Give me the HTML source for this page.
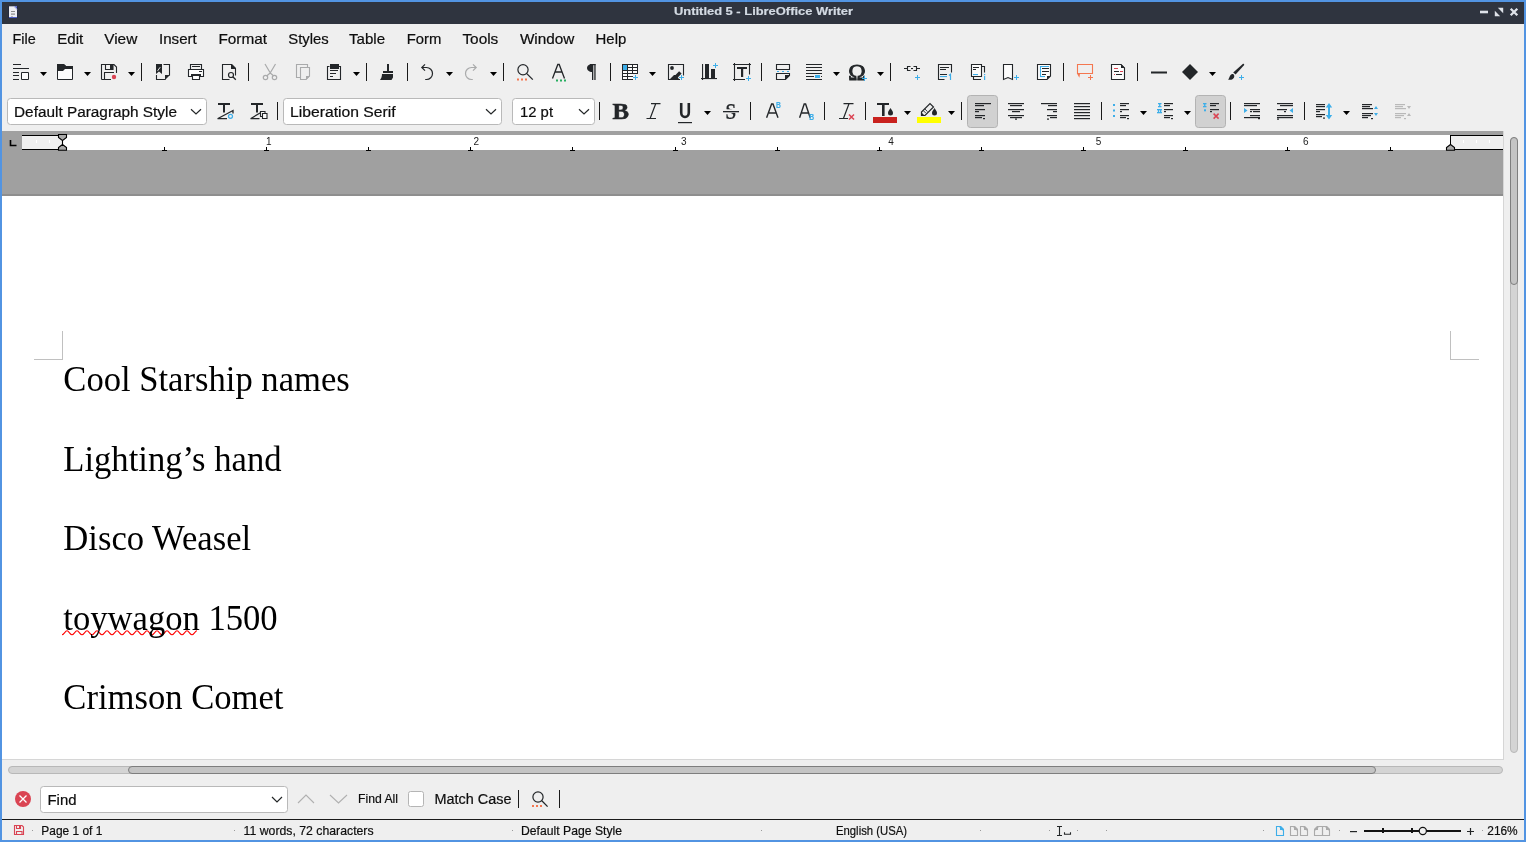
<!DOCTYPE html>
<html><head><meta charset="utf-8"><title>LibreOffice Writer</title>
<style>html,body{margin:0;padding:0;overflow:hidden;background:#efefef}svg text{white-space:pre}</style>
</head><body>
<svg width="1526" height="842" viewBox="0 0 1526 842" style="display:block;will-change:transform"><rect x="0" y="0" width="1526" height="842" fill="#5294e2" />
<rect x="2" y="2" width="1522" height="838" fill="#efefef" />
<rect x="2" y="2" width="1522" height="22" fill="#2f343f" />
<text x="674" y="15" font-family="&quot;Liberation Sans&quot;, sans-serif" font-size="11.5" font-weight="700" fill="#d3dae3" textLength="179" lengthAdjust="spacingAndGlyphs"  stroke="#d3dae3" stroke-width="0.2">Untitled 5 - LibreOffice Writer</text>
<rect x="8.5" y="6" width="9" height="12" fill="#1d2240" />
<rect x="9" y="6.3" width="8" height="11.4" fill="#eeeef2" />
<rect x="9" y="17" width="8" height="1" fill="#5060c8" />
<path d="M13.5 6.3h3.5v3.5z" fill="#5060c8" stroke="none" stroke-width="1" />
<path d="M14 6.3l3 3" fill="none" stroke="#eeeef2" stroke-width="0.7" />
<rect x="11" y="11" width="4" height="1" fill="#8a8a8a" />
<rect x="11" y="13.5" width="4" height="1.2" fill="#8a8a8a" />
<rect x="11" y="16" width="2" height="0.8" fill="#aaa" />
<rect x="1480" y="10.7" width="8" height="2.6" fill="#dfe3ea" />
<path d="M1494.8 16.2v-5.4l5.4 5.4zM1503.2 7.8v5.4l-5.4-5.4z" fill="#dfe3ea" stroke="none" stroke-width="1" />
<path d="M1510.7 8.7l6.6 6.6M1517.3 8.7l-6.6 6.6" fill="none" stroke="#dfe3ea" stroke-width="2.3" />
<text x="12.5" y="44" font-family="&quot;Liberation Sans&quot;, sans-serif" font-size="14.2" font-weight="400" fill="#0e0e0e" textLength="23.2" lengthAdjust="spacingAndGlyphs"  stroke="#0e0e0e" stroke-width="0.2">File</text>
<text x="57.3" y="44" font-family="&quot;Liberation Sans&quot;, sans-serif" font-size="14.2" font-weight="400" fill="#0e0e0e" textLength="26" lengthAdjust="spacingAndGlyphs"  stroke="#0e0e0e" stroke-width="0.2">Edit</text>
<text x="104.2" y="44" font-family="&quot;Liberation Sans&quot;, sans-serif" font-size="14.2" font-weight="400" fill="#0e0e0e" textLength="33.1" lengthAdjust="spacingAndGlyphs"  stroke="#0e0e0e" stroke-width="0.2">View</text>
<text x="159" y="44" font-family="&quot;Liberation Sans&quot;, sans-serif" font-size="14.2" font-weight="400" fill="#0e0e0e" textLength="37.8" lengthAdjust="spacingAndGlyphs"  stroke="#0e0e0e" stroke-width="0.2">Insert</text>
<text x="218.4" y="44" font-family="&quot;Liberation Sans&quot;, sans-serif" font-size="14.2" font-weight="400" fill="#0e0e0e" textLength="48.6" lengthAdjust="spacingAndGlyphs"  stroke="#0e0e0e" stroke-width="0.2">Format</text>
<text x="288.3" y="44" font-family="&quot;Liberation Sans&quot;, sans-serif" font-size="14.2" font-weight="400" fill="#0e0e0e" textLength="40.4" lengthAdjust="spacingAndGlyphs"  stroke="#0e0e0e" stroke-width="0.2">Styles</text>
<text x="349" y="44" font-family="&quot;Liberation Sans&quot;, sans-serif" font-size="14.2" font-weight="400" fill="#0e0e0e" textLength="36.1" lengthAdjust="spacingAndGlyphs"  stroke="#0e0e0e" stroke-width="0.2">Table</text>
<text x="406.8" y="44" font-family="&quot;Liberation Sans&quot;, sans-serif" font-size="14.2" font-weight="400" fill="#0e0e0e" textLength="34.6" lengthAdjust="spacingAndGlyphs"  stroke="#0e0e0e" stroke-width="0.2">Form</text>
<text x="462.4" y="44" font-family="&quot;Liberation Sans&quot;, sans-serif" font-size="14.2" font-weight="400" fill="#0e0e0e" textLength="35.9" lengthAdjust="spacingAndGlyphs"  stroke="#0e0e0e" stroke-width="0.2">Tools</text>
<text x="519.9" y="44" font-family="&quot;Liberation Sans&quot;, sans-serif" font-size="14.2" font-weight="400" fill="#0e0e0e" textLength="54.5" lengthAdjust="spacingAndGlyphs"  stroke="#0e0e0e" stroke-width="0.2">Window</text>
<text x="595.6" y="44" font-family="&quot;Liberation Sans&quot;, sans-serif" font-size="14.2" font-weight="400" fill="#0e0e0e" textLength="30.7" lengthAdjust="spacingAndGlyphs"  stroke="#0e0e0e" stroke-width="0.2">Help</text>
<rect x="13" y="64" width="8" height="1" fill="#232629" />
<rect x="13" y="68" width="16" height="1" fill="#232629" />
<rect x="13" y="72" width="6" height="1" fill="#232629" />
<rect x="13" y="75" width="6" height="1" fill="#232629" />
<rect x="13" y="79" width="6" height="1" fill="#232629" />
<path d="M21.5 72.5h7v7h-7z" fill="#fcfcfc" stroke="#232629" stroke-width="1" />
<path d="M40 72h7l-3.5 4z" fill="#000" stroke="none" stroke-width="1" />
<path d="M57.5 64.5h6.5l2 2h6.5v13h-15z" fill="#fcfcfc" stroke="#232629" stroke-width="1" />
<path d="M57 64h7l2 2h7v3h-8l-2 2h-6z" fill="#232629" stroke="none" stroke-width="1" />
<path d="M84 72h7l-3.5 4z" fill="#000" stroke="none" stroke-width="1" />
<path d="M101.5 79.5v-15h12.5l2.5 2.5v6M101.5 79.5h9.5" fill="none" stroke="#232629" stroke-width="1.1" />
<path d="M105.5 64.5v5h7.5v-5" fill="none" stroke="#232629" stroke-width="1.1" />
<rect x="110" y="65" width="3" height="4" fill="#232629" />
<path d="M104.5 79.5v-7h9.5" fill="none" stroke="#232629" stroke-width="1.1" />
<circle cx="114" cy="77" r="2.2" fill="#da4453"/>
<path d="M128 72h7l-3.5 4z" fill="#000" stroke="none" stroke-width="1" />
<rect x="141" y="63" width="1" height="18" fill="#1a1a1a" />
<path d="M156 64h6v10l-3-2.5-3 2.5z" fill="#232629" stroke="none" stroke-width="1" />
<path d="M157.6 70.8l2.6-3.6" fill="none" stroke="#fff" stroke-width="0.9" />
<path d="M163.5 64.5h6v11M156.5 75v4.5h9" fill="none" stroke="#232629" stroke-width="1.1" />
<path d="M165 80l5-5h-5z" fill="#232629" stroke="none" stroke-width="1" />
<path d="M190.5 69v-4.5h11v4.5" fill="none" stroke="#232629" stroke-width="1.1" />
<rect x="192" y="66" width="8" height="1" fill="#232629" />
<path d="M188.5 69.5h15v7h-15z" fill="#fcfcfc" stroke="#232629" stroke-width="1.1" />
<rect x="191" y="74" width="10" height="2" fill="#232629" />
<rect x="199" y="71" width="3" height="1" fill="#232629" />
<path d="M192.5 76v3.5h7v-3.5" fill="#fcfcfc" stroke="#232629" stroke-width="1.1" />
<path d="M232 64.5h-9.5v15h7M235.5 75.5v-7" fill="none" stroke="#232629" stroke-width="1.1" />
<path d="M231 64h1l4 4v1h-5z" fill="#232629" stroke="none" stroke-width="1" />
<circle cx="231" cy="75" r="2.5" fill="none" stroke="#232629" stroke-width="1.2"/>
<path d="M232.8 76.8l3 3" fill="none" stroke="#232629" stroke-width="1.3" />
<rect x="248" y="63" width="1" height="18" fill="#1a1a1a" />
<path d="M265 64l5.3 9M275.5 64l-5.3 9M270.2 73l-3.3 2.8M270.2 73l3.3 2.8" fill="none" stroke="#a9aaab" stroke-width="1.2" />
<circle cx="265.5" cy="77.5" r="2.2" fill="none" stroke="#a9aaab" stroke-width="1.2"/><circle cx="274.5" cy="77.5" r="2.2" fill="none" stroke="#a9aaab" stroke-width="1.2"/>
<path d="M300 77.5h-3.5v-13h11v3" fill="none" stroke="#a9aaab" stroke-width="1.1" />
<path d="M300.5 67.5h9v8.5l-3.5 3.5h-5.5z" fill="none" stroke="#a9aaab" stroke-width="1.1" />
<path d="M306 80v-4h4z" fill="#a9aaab" stroke="none" stroke-width="1" />
<path d="M329.5 66.5h-2v13h13v-13h-2" fill="none" stroke="#232629" stroke-width="1.1" />
<rect x="330" y="64" width="9" height="5" fill="#232629" />
<rect x="330" y="70" width="8" height="1" fill="#232629" />
<rect x="330" y="73" width="6" height="1" fill="#232629" />
<rect x="330" y="76" width="3" height="1" fill="#232629" />
<path d="M353 72h7l-3.5 4z" fill="#000" stroke="none" stroke-width="1" />
<rect x="366" y="63" width="1" height="18" fill="#1a1a1a" />
<rect x="387" y="64" width="2" height="7" fill="#232629" />
<rect x="383" y="71" width="10" height="2" fill="#232629" />
<path d="M382 74h11v3.5l-1.5 2.5h-11.5c1.2-1.5 2-3.5 2-6z" fill="#232629" stroke="none" stroke-width="1" />
<rect x="407" y="63" width="1" height="18" fill="#1a1a1a" />
<path d="M425 64.3l-3.2 3.2 3.2 3.2M422 67.5h4.5a6 6 0 0 1 0 12h-1.3" fill="none" stroke="#232629" stroke-width="1.2" />
<path d="M446 72h7l-3.5 4z" fill="#000" stroke="none" stroke-width="1" />
<path d="M473 64.3l3.2 3.2-3.2 3.2M476 67.5h-4.5a6 6 0 0 0 0 12h1.3" fill="none" stroke="#a9aaab" stroke-width="1.2" />
<path d="M490 72h7l-3.5 4z" fill="#000" stroke="none" stroke-width="1" />
<rect x="503" y="63" width="1" height="18" fill="#1a1a1a" />
<circle cx="523" cy="69.8" r="5.1" fill="none" stroke="#232629" stroke-width="1.2"/>
<path d="M526.8 73.6l6 6" fill="none" stroke="#232629" stroke-width="1.3" />
<rect x="517" y="78.5" width="2" height="2" fill="#f47750" />
<rect x="521" y="78.5" width="2" height="2" fill="#f47750" />
<rect x="525" y="78.5" width="2" height="2" fill="#f47750" />
<path d="M552.5 78.5l5.3-14h1.4l5.3 14M555 72h7" fill="none" stroke="#232629" stroke-width="1.3" />
<rect x="556" y="79.5" width="2" height="2" fill="#27ae60" />
<rect x="560" y="79.5" width="2" height="2" fill="#27ae60" />
<rect x="564" y="79.5" width="2" height="2" fill="#27ae60" />
<path d="M592 64v8c-2.8 0-5-1.8-5-4s2.2-4 5-4z" fill="#232629" stroke="none" stroke-width="1" />
<rect x="590" y="64" width="5.5" height="1.2" fill="#232629" />
<rect x="592" y="64" width="1.3" height="16" fill="#232629" />
<rect x="594.3" y="64" width="1.3" height="16" fill="#232629" />
<rect x="610" y="63" width="1" height="18" fill="#1a1a1a" />
<rect x="622" y="64" width="16" height="10" fill="#232629" />
<rect x="622" y="73" width="11" height="7" fill="#232629" />
<rect x="623" y="65" width="4" height="2" fill="#fcfcfc" />
<rect x="628" y="65" width="4" height="2" fill="#fcfcfc" />
<rect x="633" y="65" width="4" height="2" fill="#fcfcfc" />
<rect x="623" y="68" width="4" height="2" fill="#fcfcfc" />
<rect x="628" y="68" width="4" height="2" fill="#fcfcfc" />
<rect x="633" y="68" width="4" height="2" fill="#fcfcfc" />
<rect x="623" y="71" width="4" height="2" fill="#fcfcfc" />
<rect x="628" y="71" width="4" height="2" fill="#fcfcfc" />
<rect x="633" y="71" width="4" height="2" fill="#fcfcfc" />
<rect x="623" y="74" width="4" height="2" fill="#fcfcfc" />
<rect x="628" y="74" width="5" height="2" fill="#fcfcfc" />
<rect x="623" y="77" width="4" height="2" fill="#fcfcfc" />
<rect x="628" y="77" width="5" height="2" fill="#fcfcfc" />
<rect x="623" y="65" width="4" height="5" fill="#3daee9" />
<rect x="633" y="77" width="5" height="1" fill="#3daee9" />
<rect x="635" y="75" width="1" height="5" fill="#3daee9" />
<path d="M649 72h7l-3.5 4z" fill="#000" stroke="none" stroke-width="1" />
<path d="M680 79.5h-11.5v-15h15v11" fill="none" stroke="#232629" stroke-width="1.1" />
<circle cx="672" cy="68" r="1.9" fill="#232629"/>
<path d="M669 80l5-5h1.5l3.6-3.8 2.5 2.4-3.8 3.9 2 2.5z" fill="#232629" stroke="none" stroke-width="1" />
<rect x="679" y="77" width="5" height="1" fill="#3daee9" />
<rect x="681" y="75" width="1" height="5" fill="#3daee9" />
<rect x="702" y="64" width="1.1" height="16" fill="#232629" />
<rect x="701" y="78" width="16" height="1.1" fill="#232629" />
<rect x="705" y="64" width="4" height="14" fill="#232629" />
<rect x="711" y="69" width="4" height="9" fill="#232629" />
<rect x="713" y="65" width="5" height="1" fill="#3daee9" />
<rect x="715" y="63" width="1" height="5" fill="#3daee9" />
<path d="M733 64.5h18M733 79.5h12M734.5 63v18M749.5 63v11.5" fill="none" stroke="#232629" stroke-width="1.1" />
<rect x="737" y="67" width="10" height="2" fill="#232629" />
<rect x="741" y="69" width="2.2" height="8" fill="#232629" />
<rect x="746" y="78" width="5" height="1" fill="#3daee9" />
<rect x="748" y="76" width="1" height="5" fill="#3daee9" />
<rect x="761" y="63" width="1" height="18" fill="#1a1a1a" />
<path d="M776.5 64.5h13v5h-13z" fill="none" stroke="#232629" stroke-width="1.1" />
<rect x="777" y="71" width="2" height="1" fill="#3daee9" />
<rect x="782" y="71" width="2" height="1" fill="#3daee9" />
<rect x="787" y="71" width="2" height="1" fill="#3daee9" />
<path d="M776.5 73.5h13v2l-4 4h-9z" fill="none" stroke="#232629" stroke-width="1.1" />
<path d="M785 75h5l-5 5z" fill="#232629" stroke="none" stroke-width="1" />
<rect x="806" y="64" width="16" height="1" fill="#232629" />
<rect x="806" y="67" width="16" height="1" fill="#232629" />
<rect x="806" y="70" width="16" height="1" fill="#232629" />
<rect x="806" y="73" width="16" height="1" fill="#232629" />
<rect x="806" y="76" width="8" height="1" fill="#232629" />
<rect x="821" y="76" width="1" height="1" fill="#232629" />
<rect x="806" y="79" width="16" height="1" fill="#232629" />
<rect x="815" y="75" width="5" height="3" fill="#3daee9" />
<path d="M833 72h7l-3.5 4z" fill="#000" stroke="none" stroke-width="1" />
<text x="848.3" y="80" font-family="&quot;Liberation Serif&quot;, serif" font-size="22.5" font-weight="400" fill="#232629" textLength="17.5" lengthAdjust="spacingAndGlyphs" stroke="#232629" stroke-width="0.9">Ω</text>
<rect x="862" y="78" width="5" height="1" fill="#3daee9" />
<rect x="864" y="76" width="1" height="5" fill="#3daee9" />
<path d="M877 72h7l-3.5 4z" fill="#000" stroke="none" stroke-width="1" />
<rect x="890" y="63" width="1" height="18" fill="#1a1a1a" />
<path d="M904 68.5h3.5M916.5 68.5h3.5M910.5 66.5h-3v4h3M913.5 66.5h3v4h-3" fill="none" stroke="#232629" stroke-width="1.1" />
<rect x="911" y="68" width="2" height="1.1" fill="#232629" />
<rect x="915" y="77" width="5" height="1" fill="#3daee9" />
<rect x="917" y="75" width="1" height="5" fill="#3daee9" />
<path d="M944.5 79.5h-6v-15h13v8" fill="none" stroke="#232629" stroke-width="1.1" />
<rect x="940" y="67" width="9" height="1" fill="#232629" />
<rect x="940" y="69" width="6" height="1" fill="#232629" />
<rect x="940" y="74" width="7" height="1" fill="#232629" />
<rect x="940" y="76" width="7" height="1.1" fill="#3daee9" />
<path d="M949 75.5l1.5-1.3v5.8" fill="none" stroke="#3daee9" stroke-width="1.2" />
<path d="M971.5 64.5h10v12h-10z" fill="#fcfcfc" stroke="#232629" stroke-width="1.1" />
<path d="M982 66.5h2.5v6M973.5 76.5v3h7.5" fill="none" stroke="#232629" stroke-width="1.1" />
<rect x="973" y="67" width="6" height="1" fill="#232629" />
<rect x="973" y="69" width="3" height="1" fill="#232629" />
<rect x="973" y="74" width="5" height="1.1" fill="#3daee9" />
<rect x="984" y="74" width="1.2" height="1.2" fill="#3daee9" />
<rect x="984" y="76" width="1.2" height="4" fill="#3daee9" />
<path d="M1003.5 64.5h9v15l-4.5-2-4.5 2z" fill="#fcfcfc" stroke="#232629" stroke-width="1.1" />
<rect x="1014" y="77" width="5" height="1" fill="#3daee9" />
<rect x="1016" y="75" width="1" height="5" fill="#3daee9" />
<path d="M1037.5 64.5h13v11.5l-3.5 3.5h-9.5z" fill="#fcfcfc" stroke="#232629" stroke-width="1.1" />
<path d="M1047 79.5l3.5-3.5h-3.5z" fill="#232629" stroke="none" stroke-width="1" />
<path d="M1040.5 77v-10.5h8.5" fill="none" stroke="#3daee9" stroke-width="1.1" />
<rect x="1042" y="68" width="7" height="1" fill="#232629" />
<rect x="1042" y="71" width="7" height="1" fill="#232629" />
<rect x="1042" y="74" width="4" height="1" fill="#232629" />
<rect x="1040" y="76" width="5" height="1.1" fill="#3daee9" />
<rect x="1063" y="63" width="1" height="18" fill="#1a1a1a" />
<path d="M1077.5 64.5h15v9h-15z" fill="none" stroke="#f47750" stroke-width="1.1" />
<path d="M1077 73.5h3l-.6 4.3z" fill="#f47750" stroke="none" stroke-width="1" />
<rect x="1088" y="77" width="5" height="1" fill="#f47750" />
<rect x="1090" y="75" width="1" height="5" fill="#f47750" />
<path d="M1111.5 64.5h9.5l3.5 3.5v11.5h-13z" fill="#fcfcfc" stroke="#232629" stroke-width="1.1" />
<path d="M1121 64l4 4h-4z" fill="#232629" stroke="none" stroke-width="1" />
<rect x="1114" y="68" width="4" height="1" fill="#da4453" />
<rect x="1114" y="71" width="5" height="1" fill="#232629" />
<rect x="1120" y="71" width="3" height="1" fill="#da4453" />
<rect x="1114" y="74" width="1" height="1" fill="#da4453" />
<rect x="1116" y="74" width="6" height="1" fill="#232629" />
<rect x="1137" y="63" width="1" height="18" fill="#1a1a1a" />
<rect x="1151" y="71.5" width="16" height="2" fill="#232629" />
<path d="M1190 64l8 8-8 8-8-8z" fill="#232629" stroke="none" stroke-width="1" />
<path d="M1209 72h7l-3.5 4z" fill="#000" stroke="none" stroke-width="1" />
<path d="M1243 63.8c.6-.2 1.4.6 1.2 1.2l-8.6 9.6-2.4-2.2z" fill="#232629" stroke="none" stroke-width="1" />
<path d="M1233.6 74.4c1 .9 1 2.7-.3 4-1.3 1.3-3.4 1.6-5.2 1.4 .9-.9 1.1-2.3 1.7-3.5.5-1.1 1.5-1.9 2.5-2.2.5-.1 1-.1 1.3.3z" fill="#232629" stroke="none" stroke-width="1" />
<rect x="1239" y="77" width="5" height="1" fill="#3daee9" />
<rect x="1241" y="75" width="1" height="5" fill="#3daee9" />
<rect x="7.5" y="98.5" width="199" height="26" rx="3" fill="#fff" stroke="#b9b9b9"/>
<text x="14" y="117" font-family="&quot;Liberation Sans&quot;, sans-serif" font-size="14" font-weight="400" fill="#0e0e0e" textLength="163" lengthAdjust="spacingAndGlyphs"  stroke="#0e0e0e" stroke-width="0.2">Default Paragraph Style</text>
<path d="M191 109.3l5 4.6 5-4.6" fill="none" stroke="#232627" stroke-width="1.2" />
<rect x="218" y="103" width="12" height="2" fill="#232629" />
<rect x="223" y="105" width="2" height="7.5" fill="#232629" />
<path d="M217.5 118.7l15.5-8.2v3M217.5 118.7h9.5" fill="none" stroke="#232629" stroke-width="1.3" />
<circle cx="230.5" cy="116.3" r="2" fill="none" stroke="#3daee9" stroke-width="1.2"/>
<rect x="251" y="103" width="12" height="2" fill="#232629" />
<rect x="256" y="105" width="2" height="7.5" fill="#232629" />
<path d="M250.5 118.7l10-6M250.5 118.7h9" fill="none" stroke="#232629" stroke-width="1.3" />
<path d="M260.5 111.5h4.5v5h-4.5z" fill="#fcfcfc" stroke="#232629" stroke-width="1.1" />
<path d="M262.5 113.5h4.5v5h-4.5z" fill="#fcfcfc" stroke="#232629" stroke-width="1.1" />
<rect x="277" y="102" width="1" height="18" fill="#1a1a1a" />
<rect x="283.5" y="98.5" width="218" height="26" rx="3" fill="#fff" stroke="#b9b9b9"/>
<text x="290.1" y="117" font-family="&quot;Liberation Sans&quot;, sans-serif" font-size="14" font-weight="400" fill="#0e0e0e" textLength="105.5" lengthAdjust="spacingAndGlyphs"  stroke="#0e0e0e" stroke-width="0.2">Liberation Serif</text>
<path d="M486 109.3l5 4.6 5-4.6" fill="none" stroke="#232627" stroke-width="1.2" />
<rect x="512.5" y="98.5" width="82" height="26" rx="3" fill="#fff" stroke="#b9b9b9"/>
<text x="520" y="117" font-family="&quot;Liberation Sans&quot;, sans-serif" font-size="14" font-weight="400" fill="#0e0e0e" textLength="33" lengthAdjust="spacingAndGlyphs"  stroke="#0e0e0e" stroke-width="0.2">12 pt</text>
<path d="M579 109.3l5 4.6 5-4.6" fill="none" stroke="#232627" stroke-width="1.2" />
<rect x="599" y="102" width="1" height="18" fill="#1a1a1a" />
<text x="612.5" y="119" font-family="&quot;Liberation Serif&quot;, serif" font-size="23.5" font-weight="700" fill="#232629" textLength="16.5" lengthAdjust="spacingAndGlyphs" stroke="#232629" stroke-width="0.6">B</text>
<path d="M651 103.7h9.5M655.7 103.7l-5.5 14.6M646.5 118.5h9.5" fill="none" stroke="#232629" stroke-width="1.2" />
<path d="M681.2 103v9.5c0 2.5 1.6 4.5 3.8 4.5s3.8-2 3.8-4.5v-9.5" fill="none" stroke="#232629" stroke-width="2.6" />
<rect x="678" y="122" width="14" height="1.2" fill="#232629" />
<path d="M704 111h7l-3.5 4z" fill="#000" stroke="none" stroke-width="1" />
<text x="725.6" y="118.6" font-family="&quot;Liberation Serif&quot;, serif" font-size="23.5" font-weight="700" fill="#232629" textLength="10.6" lengthAdjust="spacingAndGlyphs"  stroke="#232629" stroke-width="0.2">S</text>
<rect x="722" y="109.3" width="18" height="3.6" fill="#efefef" />
<rect x="723" y="111" width="16" height="1.3" fill="#232629" />
<rect x="750" y="102" width="1" height="18" fill="#1a1a1a" />
<path d="M766.6 117.8l5-13.8h1.4l5 13.8M769 113h7" fill="none" stroke="#232629" stroke-width="1.4" />
<text x="776.1" y="107.8" font-family="&quot;Liberation Sans&quot;, sans-serif" font-size="8.4" font-weight="700" fill="#3daee9" textLength="4.9" lengthAdjust="spacingAndGlyphs"  stroke="#3daee9" stroke-width="0.2">B</text>
<path d="M799.6 117.8l4.6-13.8h1.4l4.6 13.8M801.8 113h6.4" fill="none" stroke="#232629" stroke-width="1.4" />
<text x="809.2" y="119.8" font-family="&quot;Liberation Sans&quot;, sans-serif" font-size="8.4" font-weight="700" fill="#3daee9" textLength="4.9" lengthAdjust="spacingAndGlyphs"  stroke="#3daee9" stroke-width="0.2">B</text>
<rect x="824" y="102" width="1" height="18" fill="#1a1a1a" />
<path d="M843.5 103.7h10M849 103.7l-5.5 14.6M839 118.5h9" fill="none" stroke="#232629" stroke-width="1.2" />
<path d="M849 114.5l5 5M854 114.5l-5 5" fill="none" stroke="#da4453" stroke-width="1.5" />
<rect x="865" y="102" width="1" height="18" fill="#1a1a1a" />
<rect x="877" y="103" width="12" height="2" fill="#232629" />
<rect x="882" y="105" width="2.6" height="11" fill="#232629" />
<path d="M890.5 108c1.3 2 2.5 3.5 2.5 5a2.5 2.5 0 0 1-5 0c0-1.5 1.2-3 2.5-5z" fill="#232629" stroke="none" stroke-width="1" />
<rect x="873" y="117" width="24" height="6" fill="#c9211e" />
<path d="M904 111h7l-3.5 4z" fill="#000" stroke="none" stroke-width="1" />
<path d="M921.5 115.5v-3.5l8.5-8.5 3.5 3.5-8.5 8.5z" fill="none" stroke="#232629" stroke-width="1.2" />
<path d="M921 112l3.5 3.5h-3.5z" fill="#232629" stroke="none" stroke-width="1" />
<path d="M923.3 110.6l2.6 2.6M924.9 109l2.6 2.6" fill="none" stroke="#232629" stroke-width="0.9" />
<path d="M934.5 108c1.3 2 2.5 3.5 2.5 5a2.5 2.5 0 0 1-5 0c0-1.5 1.2-3 2.5-5z" fill="#232629" stroke="none" stroke-width="1" />
<rect x="917" y="117" width="24" height="6" fill="#ffff00" />
<path d="M948 111h7l-3.5 4z" fill="#000" stroke="none" stroke-width="1" />
<rect x="961" y="102" width="1" height="18" fill="#1a1a1a" />
<rect x="967.5" y="95.5" width="30" height="32" rx="3" fill="#d1d1d1" stroke="#b3b3b3"/>
<rect x="975" y="103" width="16" height="1.2" fill="#232629" />
<rect x="975" y="105" width="9" height="1.2" fill="#232629" />
<rect x="975" y="109" width="10" height="1.2" fill="#232629" />
<rect x="975" y="111" width="4" height="1.2" fill="#232629" />
<rect x="975" y="115" width="10" height="1.2" fill="#232629" />
<rect x="975" y="117" width="7" height="1.2" fill="#232629" />
<rect x="983" y="118" width="2" height="1.2" fill="#232629" />
<rect x="1008" y="103" width="16" height="1.2" fill="#232629" />
<rect x="1010" y="105" width="12" height="1.2" fill="#232629" />
<rect x="1008" y="109" width="16" height="1.2" fill="#232629" />
<rect x="1012" y="111" width="8" height="1.2" fill="#232629" />
<rect x="1008" y="115" width="16" height="1.2" fill="#232629" />
<rect x="1010" y="117" width="12" height="1.2" fill="#232629" />
<rect x="1015" y="118.5" width="2" height="1.2" fill="#232629" />
<rect x="1041" y="103" width="16" height="1.2" fill="#232629" />
<rect x="1048" y="105" width="9" height="1.2" fill="#232629" />
<rect x="1047" y="109" width="10" height="1.2" fill="#232629" />
<rect x="1053" y="111" width="4" height="1.2" fill="#232629" />
<rect x="1047" y="115" width="10" height="1.2" fill="#232629" />
<rect x="1050" y="117" width="7" height="1.2" fill="#232629" />
<rect x="1047" y="118.5" width="2" height="1.2" fill="#232629" />
<rect x="1074" y="103" width="16" height="1.2" fill="#232629" />
<rect x="1074" y="106" width="16" height="1.2" fill="#232629" />
<rect x="1074" y="109" width="16" height="1.2" fill="#232629" />
<rect x="1074" y="112" width="16" height="1.2" fill="#232629" />
<rect x="1074" y="115" width="16" height="1.2" fill="#232629" />
<rect x="1074" y="118" width="16" height="1.2" fill="#232629" />
<rect x="1101" y="102" width="1" height="18" fill="#1a1a1a" />
<rect x="1113" y="104" width="2" height="2" fill="#3daee9" />
<rect x="1113" y="109.5" width="2" height="2" fill="#3daee9" />
<rect x="1113" y="115" width="2" height="2" fill="#3daee9" />
<rect x="1120" y="103" width="9" height="1.2" fill="#232629" />
<rect x="1120" y="105" width="6" height="1.2" fill="#232629" />
<rect x="1120" y="109" width="9" height="1.2" fill="#232629" />
<rect x="1120" y="111" width="2" height="1.2" fill="#232629" />
<rect x="1120" y="115" width="9" height="1.2" fill="#232629" />
<rect x="1120" y="117" width="6" height="1.2" fill="#232629" />
<rect x="1127" y="118" width="2" height="1.2" fill="#232629" />
<path d="M1140 111h7l-3.5 4z" fill="#000" stroke="none" stroke-width="1" />
<rect x="1158" y="103" width="3.5" height="1.3" fill="#3daee9" />
<rect x="1158" y="106" width="3.5" height="1.3" fill="#3daee9" />
<rect x="1159.1" y="103" width="1.3" height="4" fill="#3daee9" />
<rect x="1157" y="109" width="5" height="1.3" fill="#3daee9" />
<rect x="1157" y="112" width="5" height="1.3" fill="#3daee9" />
<rect x="1157.9" y="109" width="1.3" height="4" fill="#3daee9" />
<rect x="1160" y="109" width="1.3" height="4" fill="#3daee9" />
<rect x="1164" y="103" width="9" height="1.2" fill="#232629" />
<rect x="1164" y="105" width="6" height="1.2" fill="#232629" />
<rect x="1164" y="109" width="9" height="1.2" fill="#232629" />
<rect x="1164" y="111" width="2" height="1.2" fill="#232629" />
<rect x="1164" y="115" width="9" height="1.2" fill="#232629" />
<rect x="1164" y="117" width="6" height="1.2" fill="#232629" />
<rect x="1171" y="118" width="2" height="1.2" fill="#232629" />
<path d="M1184 111h7l-3.5 4z" fill="#000" stroke="none" stroke-width="1" />
<rect x="1195.5" y="95.5" width="30" height="32" rx="3" fill="#d1d1d1" stroke="#b3b3b3"/>
<rect x="1203" y="103" width="3.5" height="1.3" fill="#3daee9" />
<rect x="1203" y="106" width="3.5" height="1.3" fill="#3daee9" />
<rect x="1204.1" y="103" width="1.3" height="4" fill="#3daee9" />
<rect x="1204" y="109.3" width="2" height="2" fill="#3daee9" />
<rect x="1210" y="103" width="9" height="1.2" fill="#232629" />
<rect x="1210" y="105" width="6" height="1.2" fill="#232629" />
<rect x="1210" y="109" width="9" height="1.2" fill="#232629" />
<rect x="1210" y="111" width="2" height="1.2" fill="#232629" />
<path d="M1213.6 113.6l5 5M1218.6 113.6l-5 5" fill="none" stroke="#da4453" stroke-width="1.5" />
<rect x="1230" y="102" width="1" height="18" fill="#1a1a1a" />
<rect x="1244" y="103" width="16" height="1.2" fill="#232629" />
<rect x="1244" y="105" width="13" height="1.2" fill="#232629" />
<rect x="1250" y="109" width="10" height="1.2" fill="#232629" />
<rect x="1250" y="111" width="2" height="1.2" fill="#232629" />
<rect x="1253" y="111" width="7" height="1.2" fill="#232629" />
<rect x="1244" y="117" width="16" height="1.2" fill="#232629" />
<rect x="1250" y="115" width="10" height="1.2" fill="#232629" />
<rect x="1258" y="118" width="2" height="1.2" fill="#232629" />
<path d="M1244 108l3.5 2.5-3.5 2.5z" fill="#3daee9" stroke="none" stroke-width="1" />
<rect x="1277" y="103" width="16" height="1.2" fill="#232629" />
<rect x="1280" y="105" width="13" height="1.2" fill="#232629" />
<rect x="1277" y="109" width="10" height="1.2" fill="#232629" />
<rect x="1284" y="111" width="2" height="1.2" fill="#232629" />
<rect x="1277" y="115" width="16" height="1.2" fill="#232629" />
<rect x="1277" y="117" width="16" height="1.2" fill="#232629" />
<rect x="1277" y="118.5" width="2" height="1.2" fill="#232629" />
<path d="M1293 108l-3.5 2.5 3.5 2.5z" fill="#3daee9" stroke="none" stroke-width="1" />
<rect x="1304" y="102" width="1" height="18" fill="#1a1a1a" />
<rect x="1316" y="104" width="9" height="1.2" fill="#232629" />
<rect x="1316" y="106" width="9" height="1.2" fill="#232629" />
<rect x="1316" y="109" width="9" height="1.2" fill="#232629" />
<rect x="1316" y="111" width="4" height="1.2" fill="#232629" />
<rect x="1316" y="114" width="9" height="1.2" fill="#232629" />
<rect x="1316" y="116" width="6" height="1.2" fill="#232629" />
<rect x="1323" y="117.5" width="2" height="1.2" fill="#232629" />
<rect x="1328" y="105" width="2" height="12" fill="#3daee9" />
<path d="M1325.8 107.5l3.2-4.5 3.2 4.5zM1325.8 115l3.2 4.5 3.2-4.5z" fill="#3daee9" stroke="none" stroke-width="1" />
<path d="M1343 111h7l-3.5 4z" fill="#000" stroke="none" stroke-width="1" />
<rect x="1362" y="104" width="10" height="1.2" fill="#232629" />
<rect x="1362" y="106" width="8" height="1.2" fill="#232629" />
<rect x="1362" y="108" width="11" height="1.2" fill="#232629" />
<rect x="1362" y="113" width="11" height="1.2" fill="#232629" />
<rect x="1362" y="115" width="9" height="1.2" fill="#232629" />
<rect x="1362" y="117" width="6" height="1.2" fill="#232629" />
<rect x="1371" y="118" width="2" height="1.2" fill="#232629" />
<path d="M1374 109l2-3 2 3zM1374 113l2 3 2-3z" fill="#3daee9" stroke="none" stroke-width="1" />
<rect x="1395" y="104" width="10" height="1.2" fill="#b9b9b9" />
<rect x="1395" y="106" width="8" height="1.2" fill="#b9b9b9" />
<rect x="1395" y="108" width="11" height="1.2" fill="#b9b9b9" />
<rect x="1395" y="113" width="11" height="1.2" fill="#b9b9b9" />
<rect x="1395" y="115" width="9" height="1.2" fill="#b9b9b9" />
<rect x="1395" y="117" width="6" height="1.2" fill="#b9b9b9" />
<rect x="1404" y="118" width="2" height="1.2" fill="#b9b9b9" />
<path d="M1407 106l2 3 2-3zM1407 116l2-3 2 3z" fill="#b9b9b9" stroke="none" stroke-width="1" />
<rect x="2" y="131" width="1501" height="65" fill="#a0a0a0" />
<rect x="2" y="194" width="1501" height="2" fill="#8e8e8e" />
<rect x="2" y="196" width="1501" height="563" fill="#ffffff" />
<rect x="2" y="759" width="1502" height="1" fill="#d6d6d6" />
<rect x="1503" y="131" width="1" height="629" fill="#d6d6d6" />
<rect x="62" y="135" width="1388" height="15" fill="#ffffff" />
<rect x="22" y="135" width="40.5" height="15" fill="#efefef" />
<rect x="22" y="135" width="40" height="1" fill="#000" />
<rect x="22" y="149" width="40" height="1" fill="#000" />
<rect x="36" y="140" width="1" height="3" fill="#fff" />
<rect x="49" y="140" width="1" height="3" fill="#fff" />
<path d="M58.5 134.5H66.5V137.5L62.5 140.5V144.5L66.5 147.5V150.3H58.5V147.5L62.5 144.5V140.5L58.5 137.5Z" fill="#a9a9a9" stroke="#000" stroke-width="1.1" />
<path d="M10.5 140v5.5h6" fill="none" stroke="#000" stroke-width="1.6" />
<rect x="1450.5" y="135" width="52.5" height="15" fill="#efefef" />
<rect x="1450" y="135" width="53" height="1" fill="#000" />
<rect x="1451" y="149" width="52" height="1" fill="#000" />
<rect x="1450" y="135" width="1" height="10" fill="#000" />
<rect x="1463" y="140" width="1" height="3" fill="#fff" />
<rect x="1476" y="140" width="1" height="3" fill="#fff" />
<rect x="1489" y="140" width="1" height="3" fill="#fff" />
<path d="M1450.5 144.5L1454.5 147.5V150.3H1446.5V147.5Z" fill="#a9a9a9" stroke="#000" stroke-width="1.1" />
<rect x="162" y="150" width="5" height="1" fill="#000" />
<rect x="164" y="147" width="1" height="3" fill="#000" />
<rect x="264" y="150" width="5" height="1" fill="#000" />
<rect x="266" y="147" width="1" height="3" fill="#000" />
<rect x="366" y="150" width="5" height="1" fill="#000" />
<rect x="368" y="147" width="1" height="3" fill="#000" />
<rect x="468" y="150" width="5" height="1" fill="#000" />
<rect x="470" y="147" width="1" height="3" fill="#000" />
<rect x="570" y="150" width="5" height="1" fill="#000" />
<rect x="572" y="147" width="1" height="3" fill="#000" />
<rect x="673" y="150" width="5" height="1" fill="#000" />
<rect x="675" y="147" width="1" height="3" fill="#000" />
<rect x="775" y="150" width="5" height="1" fill="#000" />
<rect x="777" y="147" width="1" height="3" fill="#000" />
<rect x="877" y="150" width="5" height="1" fill="#000" />
<rect x="879" y="147" width="1" height="3" fill="#000" />
<rect x="979" y="150" width="5" height="1" fill="#000" />
<rect x="981" y="147" width="1" height="3" fill="#000" />
<rect x="1081" y="150" width="5" height="1" fill="#000" />
<rect x="1083" y="147" width="1" height="3" fill="#000" />
<rect x="1183" y="150" width="5" height="1" fill="#000" />
<rect x="1185" y="147" width="1" height="3" fill="#000" />
<rect x="1285" y="150" width="5" height="1" fill="#000" />
<rect x="1287" y="147" width="1" height="3" fill="#000" />
<rect x="1388" y="150" width="5" height="1" fill="#000" />
<rect x="1390" y="147" width="1" height="3" fill="#000" />
<text x="266.1" y="145" font-family="&quot;Liberation Sans&quot;, sans-serif" font-size="10" font-weight="400" fill="#222" >1</text>
<text x="473.5" y="145" font-family="&quot;Liberation Sans&quot;, sans-serif" font-size="10" font-weight="400" fill="#222" >2</text>
<text x="680.9" y="145" font-family="&quot;Liberation Sans&quot;, sans-serif" font-size="10" font-weight="400" fill="#222" >3</text>
<text x="888.3" y="145" font-family="&quot;Liberation Sans&quot;, sans-serif" font-size="10" font-weight="400" fill="#222" >4</text>
<text x="1095.7" y="145" font-family="&quot;Liberation Sans&quot;, sans-serif" font-size="10" font-weight="400" fill="#222" >5</text>
<text x="1303.1" y="145" font-family="&quot;Liberation Sans&quot;, sans-serif" font-size="10" font-weight="400" fill="#222" >6</text>
<rect x="1510.5" y="137.5" width="7" height="615" rx="3.5" fill="#d4d4d4" stroke="#b8b8b8"/>
<rect x="1510.5" y="137.5" width="7" height="147" rx="3.5" fill="#c4c4c4" stroke="#7e7e7e"/>
<rect x="8.5" y="766.5" width="1494" height="7" rx="3.5" fill="#d4d4d4" stroke="#b8b8b8"/>
<rect x="128.5" y="766.5" width="1247" height="7" rx="3.5" fill="#c4c4c4" stroke="#7e7e7e"/>
<rect x="62" y="331" width="1" height="29" fill="#c0c0c0" />
<rect x="34" y="359" width="29" height="1" fill="#c0c0c0" />
<rect x="1450" y="331" width="1" height="29" fill="#c0c0c0" />
<rect x="1450" y="359" width="29" height="1" fill="#c0c0c0" />
<path d="M62 634.8 C63.8 634.8 65.2 630.8 67 630.8 C68.8 630.8 70.2 634.8 72 634.8 C73.8 634.8 75.2 630.8 77 630.8 C78.8 630.8 80.2 634.8 82 634.8 C83.8 634.8 85.2 630.8 87 630.8 C88.8 630.8 90.2 634.8 92 634.8 C93.8 634.8 95.2 630.8 97 630.8 C98.8 630.8 100.2 634.8 102 634.8 C103.8 634.8 105.2 630.8 107 630.8 C108.8 630.8 110.2 634.8 112 634.8 C113.8 634.8 115.2 630.8 117 630.8 C118.8 630.8 120.2 634.8 122 634.8 C123.8 634.8 125.2 630.8 127 630.8 C128.8 630.8 130.2 634.8 132 634.8 C133.8 634.8 135.2 630.8 137 630.8 C138.8 630.8 140.2 634.8 142 634.8 C143.8 634.8 145.2 630.8 147 630.8 C148.8 630.8 150.2 634.8 152 634.8 C153.8 634.8 155.2 630.8 157 630.8 C158.8 630.8 160.2 634.8 162 634.8 C163.8 634.8 165.2 630.8 167 630.8 C168.8 630.8 170.2 634.8 172 634.8 C173.8 634.8 175.2 630.8 177 630.8 C178.8 630.8 180.2 634.8 182 634.8 C183.8 634.8 185.2 630.8 187 630.8 C188.8 630.8 190.2 634.8 192 634.8 C193.8 634.8 195.2 630.8 197 630.8" fill="none" stroke="#ff0000" stroke-width="1.1" />
<g transform="translate(63.3 391) scale(1.002 1.045)"><text x="0" y="0" font-family="&quot;Liberation Serif&quot;, serif" font-size="34.56" fill="#000">Cool Starship names</text></g>
<g transform="translate(63.3 471) scale(1.002 1.045)"><text x="0" y="0" font-family="&quot;Liberation Serif&quot;, serif" font-size="34.56" fill="#000">Lighting’s hand</text></g>
<g transform="translate(63.3 550) scale(1.002 1.045)"><text x="0" y="0" font-family="&quot;Liberation Serif&quot;, serif" font-size="34.56" fill="#000">Disco Weasel</text></g>
<g transform="translate(63.3 630) scale(1.002 1.045)"><text x="0" y="0" font-family="&quot;Liberation Serif&quot;, serif" font-size="34.56" fill="#000">toywagon 1500</text></g>
<g transform="translate(63.3 709) scale(1.002 1.045)"><text x="0" y="0" font-family="&quot;Liberation Serif&quot;, serif" font-size="34.56" fill="#000">Crimson Comet</text></g>
<circle cx="23" cy="799" r="8" fill="#da4453"/>
<path d="M19.5 795.5l7 7M26.5 795.5l-7 7" fill="none" stroke="#fff" stroke-width="1.3" />
<rect x="40.5" y="786.5" width="247" height="26" rx="3" fill="#fff" stroke="#b9b9b9"/>
<text x="47.5" y="805" font-family="&quot;Liberation Sans&quot;, sans-serif" font-size="14" font-weight="400" fill="#0e0e0e" textLength="29" lengthAdjust="spacingAndGlyphs"  stroke="#0e0e0e" stroke-width="0.2">Find</text>
<path d="M272 797l5 5 5-5" fill="none" stroke="#232627" stroke-width="1.2" />
<path d="M298 803l8-8 8 8" fill="none" stroke="#b0b0b0" stroke-width="1.1" />
<path d="M330 795l8.5 8 8.5-8" fill="none" stroke="#b0b0b0" stroke-width="1.1" />
<text x="358" y="803" font-family="&quot;Liberation Sans&quot;, sans-serif" font-size="13" font-weight="400" fill="#0e0e0e" textLength="40" lengthAdjust="spacingAndGlyphs"  stroke="#0e0e0e" stroke-width="0.2">Find All</text>
<rect x="408.5" y="791.5" width="15" height="15" rx="2" fill="#fff" stroke="#b5b5b5"/>
<text x="434.5" y="804" font-family="&quot;Liberation Sans&quot;, sans-serif" font-size="14" font-weight="400" fill="#0e0e0e" textLength="77" lengthAdjust="spacingAndGlyphs"  stroke="#0e0e0e" stroke-width="0.2">Match Case</text>
<rect x="518" y="790" width="1" height="18" fill="#1a1a1a" />
<circle cx="538" cy="797" r="5.1" fill="none" stroke="#232629" stroke-width="1.2"/>
<path d="M541.8 800.8l5.8 5.8" fill="none" stroke="#232629" stroke-width="1.3" />
<rect x="532" y="805" width="2" height="2" fill="#f47750" />
<rect x="536" y="805" width="2" height="2" fill="#f47750" />
<rect x="540" y="805" width="2" height="2" fill="#f47750" />
<rect x="559" y="790" width="1" height="18" fill="#1a1a1a" />
<rect x="2" y="819" width="1522" height="1" fill="#1a1a1a" />
<path d="M14.5 825.5h7.5l1.5 1.5v7.5h-9z" fill="none" stroke="#da4453" stroke-width="1.1" />
<path d="M16.5 825.5v3h4v-3M16.5 834.5v-3h5.5v3" fill="none" stroke="#da4453" stroke-width="1.1" />
<rect x="19" y="825" width="2" height="4" fill="#da4453" />
<rect x="32" y="830" width="1" height="1" fill="#9a9a9a" />
<rect x="234" y="830" width="1" height="1" fill="#9a9a9a" />
<rect x="512" y="830" width="1" height="1" fill="#9a9a9a" />
<rect x="761" y="830" width="1" height="1" fill="#9a9a9a" />
<rect x="980" y="830" width="1" height="1" fill="#9a9a9a" />
<rect x="1049" y="830" width="1" height="1" fill="#9a9a9a" />
<rect x="1077" y="830" width="1" height="1" fill="#9a9a9a" />
<rect x="1106" y="830" width="1" height="1" fill="#9a9a9a" />
<rect x="1263" y="830" width="1" height="1" fill="#9a9a9a" />
<rect x="1339" y="830" width="1" height="1" fill="#9a9a9a" />
<rect x="1482" y="830" width="1" height="1" fill="#9a9a9a" />
<text x="41.3" y="835" font-family="&quot;Liberation Sans&quot;, sans-serif" font-size="12.6" font-weight="400" fill="#0e0e0e" textLength="61" lengthAdjust="spacingAndGlyphs"  stroke="#0e0e0e" stroke-width="0.2">Page 1 of 1</text>
<text x="243.6" y="835" font-family="&quot;Liberation Sans&quot;, sans-serif" font-size="12.6" font-weight="400" fill="#0e0e0e" textLength="130" lengthAdjust="spacingAndGlyphs"  stroke="#0e0e0e" stroke-width="0.2">11 words, 72 characters</text>
<text x="521" y="835" font-family="&quot;Liberation Sans&quot;, sans-serif" font-size="12.6" font-weight="400" fill="#0e0e0e" textLength="101" lengthAdjust="spacingAndGlyphs"  stroke="#0e0e0e" stroke-width="0.2">Default Page Style</text>
<text x="836" y="835" font-family="&quot;Liberation Sans&quot;, sans-serif" font-size="12.6" font-weight="400" fill="#0e0e0e" textLength="71" lengthAdjust="spacingAndGlyphs"  stroke="#0e0e0e" stroke-width="0.2">English (USA)</text>
<path d="M1057 826.5h5M1059.5 826.5v9M1057 835.5h5" fill="none" stroke="#232627" stroke-width="1.1" />
<path d="M1064.5 832.3v2h6v-2" fill="none" stroke="#232627" stroke-width="1.1" />
<path d="M1276.5 826.5H1279.5L1283.5 830.5V835.5H1276.5Z" fill="none" stroke="#3daee9" stroke-width="1.1" />
<path d="M1280 826h1l3 3v1h-4z" fill="#3daee9" stroke="none" stroke-width="1" />
<path d="M1290.5 826.5H1293.5L1297.5 830.5V835.5H1290.5Z" fill="none" stroke="#aaaaaa" stroke-width="1.1" />
<path d="M1294 826h1l3 3v1h-4z" fill="#aaaaaa" stroke="none" stroke-width="1" />
<path d="M1300.5 826.5H1303.5L1307.5 830.5V835.5H1300.5Z" fill="none" stroke="#aaaaaa" stroke-width="1.1" />
<path d="M1304 826h1l3 3v1h-4z" fill="#aaaaaa" stroke="none" stroke-width="1" />
<path d="M1322.5 826.5H1318.5L1314.5 830.5V835.5H1322.5Z" fill="none" stroke="#aaaaaa" stroke-width="1.1" />
<path d="M1318 826h-1l-3 3v1h4z" fill="#aaaaaa" stroke="none" stroke-width="1" />
<path d="M1322.5 826.5H1325.5L1329.5 830.5V835.5H1322.5Z" fill="none" stroke="#aaaaaa" stroke-width="1.1" />
<path d="M1326 826h1l3 3v1h-4z" fill="#aaaaaa" stroke="none" stroke-width="1" />
<rect x="1350" y="831" width="7" height="1.2" fill="#232627" />
<rect x="1364" y="830" width="97" height="2" fill="#111" />
<rect x="1382" y="828" width="2" height="5" fill="#111" />
<rect x="1411" y="828" width="2" height="5" fill="#111" />
<circle cx="1422.8" cy="831" r="3.6" fill="#f2f2f2" stroke="#111" stroke-width="1.2"/>
<path d="M1467 831.5h7M1470.5 828v7" fill="none" stroke="#232627" stroke-width="1.2" />
<text x="1487.3" y="835" font-family="&quot;Liberation Sans&quot;, sans-serif" font-size="12.6" font-weight="400" fill="#0e0e0e" textLength="30.4" lengthAdjust="spacingAndGlyphs"  stroke="#0e0e0e" stroke-width="0.2">216%</text></svg>
</body></html>
